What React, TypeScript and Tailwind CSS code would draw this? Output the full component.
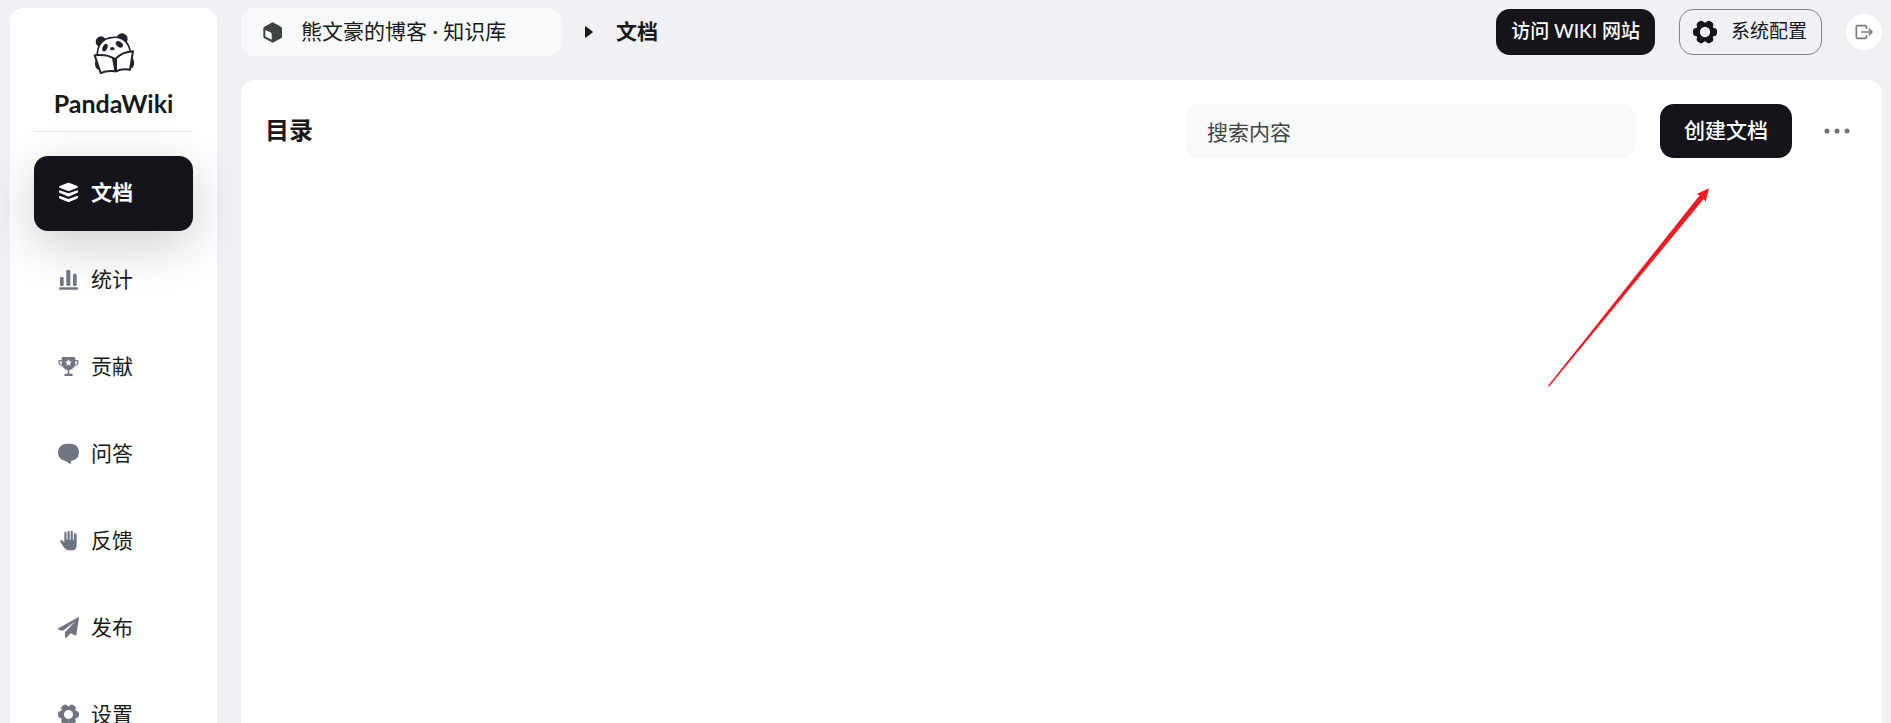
import type { ReactNode } from "react";

const gearLobes = [0, 60, 120, 180, 240, 300];

function GearIcon({ className }: { className?: string }) {
  return (
    <svg viewBox="-36 -36 72 72" className={className} fill="currentColor" aria-hidden="true">
      <circle r="22" fill="none" stroke="currentColor" strokeWidth="13" />
      {gearLobes.map((angle) => (
        <rect key={angle} x="16" y="-12" width="20" height="24" rx="10" transform={`rotate(${angle})`} />
      ))}
    </svg>
  );
}

function NavIcon({ children }: { children: ReactNode }) {
  return (
    <svg viewBox="0 0 63 63" className="size-[21px] shrink-0" fill="currentColor" aria-hidden="true">
      {children}
    </svg>
  );
}

const navItems = [
  {
    label: "文档",
    active: true,
    icon: (
      <NavIcon>
        <path d="M28 3Q31.500 1.500 35 3L58 12Q62 14.500 58 17L35 26Q31.500 27.500 28 26L5 17Q1 14.500 5 12Z" />
        <path d="M3 26Q5 24 9 26L31.500 34L54 26Q58 24 60 26Q62 31 57 33L35 42.500Q31.500 44 28 42.500L6 33Q1 31 3 26Z" />
        <path d="M3 43Q5 41 9 43L31.500 51L54 43Q58 41 60 43Q62 48 57 50L35 59.500Q31.500 61 28 59.500L6 50Q1 48 3 43Z" />
      </NavIcon>
    ),
  },
  {
    label: "统计",
    icon: (
      <NavIcon>
        <rect x="6" y="24" width="11" height="27" rx="4" />
        <rect x="25" y="2" width="12" height="49" rx="5" />
        <rect x="45" y="14" width="11" height="37" rx="4" />
        <rect x="3" y="55" width="57" height="7" rx="2" />
      </NavIcon>
    ),
  },
  {
    label: "贡献",
    icon: (
      <NavIcon>
        <path
          fillRule="evenodd"
          d="M14 3H49Q52 3 52 8V21Q50 39 34 42.500V53H42Q44 53 44 56.500Q44 60 42 60H21Q19 60 19 56.500Q19 53 21 53H29V42.500Q13 39 11 21V8Q11 3 14 3ZM31.500 9.500L28.500 16L21.500 17L26.500 22L25.300 29L31.500 25.500L37.700 29L36.500 22L41.500 17L34.500 16Z"
        />
        <path
          d="M12 14H6Q2.500 14 3 18Q4.500 28 15 29M51 14H57Q60.500 14 60 18Q58.500 28 48 29"
          fill="none"
          stroke="currentColor"
          strokeWidth="4"
        />
      </NavIcon>
    ),
  },
  {
    label: "问答",
    icon: (
      <NavIcon>
        <path d="M25 2H38Q63 4 63 28.500Q62 51 39 54V60Q39 63 36 62L24 54.500Q0 50 0 28.500Q1 4 25 2Z" />
      </NavIcon>
    ),
  },
  {
    label: "反馈",
    icon: (
      <NavIcon>
        <path d="M19 37V9Q19 5.500 22 5.500Q25.500 5.500 25.500 9V29H28.500V5Q28.500 2 31.500 2Q35 2 35 5V29H38V5Q38 2 41 2Q44.500 2 44.500 5V29H47.500V13Q47.500 9.500 50.500 9.500Q56 9 56 14V46Q56 61 43 61H32Q25 61 20 55L8 38Q6 34 8 31Q11 28 14 32Z" />
      </NavIcon>
    ),
  },
  {
    label: "发布",
    icon: (
      <NavIcon>
        <path d="M61 1Q63 0 63 3L55 53Q54 57 50 55L38 49L25 62Q21 64 21 60V46L53 12L15 41L2 38Q-1 36 2 33Z" />
      </NavIcon>
    ),
  },
  {
    label: "设置",
    icon: <GearIcon className="size-[21px] shrink-0" />,
  },
];

function PandaLogo() {
  return (
    <svg viewBox="275 97 132 132" className="size-11" fill="#22222d" aria-hidden="true">
      <circle cx="302" cy="126" r="16" />
      <circle cx="365" cy="118" r="17" />
      <path d="M287 180Q279 198 291 209L304 210V180ZM394 170Q408 190 396 205L380 205V175Z" />
      <path d="M291 170C289 134 310 114 339 113C370 111 388 132 390 160L344 182Z" fill="#fff" stroke="#22222d" strokeWidth="5" />
      <ellipse cx="314" cy="144" rx="7" ry="12" transform="rotate(25 314 144)" />
      <ellipse cx="357" cy="134" rx="8" ry="12" transform="rotate(-52 357 134)" />
      <ellipse cx="336" cy="147" rx="7" ry="5" />
      <path d="M283 167Q320 163 342 177L346 215Q322 211 301 220Z" fill="#fff" stroke="#22222d" strokeWidth="6" strokeLinejoin="round" />
      <path d="M346 177Q366 157 398 155L389 210Q365 206 347 215Z" fill="#fff" stroke="#22222d" strokeWidth="6" strokeLinejoin="round" />
      <path d="M335 176H350V216H343Z" />
    </svg>
  );
}

function Sidebar() {
  return (
    <aside className="w-[207px] shrink-0 rounded-t-[14px] bg-white px-6 pt-6">
      <div className="flex flex-col items-center border-b border-[#ececee] pb-3">
        <PandaLogo />
        <span className="mt-[11px] text-[25px] leading-8 font-bold">PandaWiki</span>
      </div>
      <nav className="mt-6 flex flex-col gap-3">
        {navItems.map((item) => (
          <a
            key={item.label}
            href="#"
            className={
              item.active
                ? "flex h-[75px] items-center gap-3 rounded-[14px] bg-[#14151a] px-6 pb-0.5 font-bold text-white shadow-[0_14px_52px_rgba(0,0,0,0.2)]"
                : "flex h-[75px] items-center gap-3 rounded-[14px] px-6 pb-0.5 text-[#6f7681]"
            }
          >
            {item.icon}
            <span className={item.active ? "pb-0.5 text-white" : "pb-0.5 text-[#171a17]"}>{item.label}</span>
          </a>
        ))}
      </nav>
    </aside>
  );
}

function Header() {
  return (
    <header className="flex h-12 items-center">
      <button type="button" className="flex h-12 w-[321px] items-center gap-[18px] rounded-[14px] bg-[#f8f9fb] px-[21px]">
        <svg viewBox="0 0 63 63" className="size-[21px]" aria-hidden="true">
          <path
            d="M29 2Q32 0 35 2L57 14Q60 16 60 19V44Q60 47 57 49L35 61Q32 63 29 61L7 49Q4 47 4 44V19Q4 16 7 14Z"
            fill="#40443f"
          />
          <path d="M10 24L25 31Q29 33 29 37V53L13 45Q10 43 10 40Z" fill="#f8f9fb" />
        </svg>
        <span className="pb-0.5">熊文豪的博客 · 知识库</span>
      </button>
      <svg viewBox="0 0 8 12" className="mx-[23px] h-3 w-2" fill="#171a17" aria-hidden="true">
        <path d="M0 1Q0 0 1 .5L7.500 5.500Q8 6 7.500 6.500L1 11.500Q0 12 0 11Z" />
      </svg>
      <span className="pb-0.5 font-bold">文档</span>

      <div className="ml-auto flex items-center gap-6">
        <button type="button" className="h-[46px] rounded-[14px] bg-[#14151a] px-[15px] pb-0.5 text-[19px] font-medium text-white">
          访问 WIKI 网站
        </button>
        <button
          type="button"
          className="flex h-[46px] items-center gap-3.5 rounded-[14px] border border-[#85868b] pr-3.5 pl-[13px] text-[19px] text-[#14151a]"
        >
          <GearIcon className="size-6" />
          <span className="pb-0.5">系统配置</span>
        </button>
        <button type="button" aria-label="退出" className="flex size-9 items-center justify-center rounded-full bg-white">
          <svg
            viewBox="0 0 54 54"
            className="size-[18px]"
            fill="none"
            stroke="#7b7b7b"
            strokeWidth="5"
            strokeLinecap="round"
            strokeLinejoin="round"
            aria-hidden="true"
          >
            <path d="M34 16V11Q34 8 31 8H7Q4 8 4 11V43Q4 46 7 46H31Q34 46 34 43V38M20 27H51M43 19L51 27L43 35" />
          </svg>
        </button>
      </div>
    </header>
  );
}

function Catalog() {
  return (
    <section className="relative mt-6 flex-1 rounded-t-[14px] bg-white p-6">
      <div className="flex items-center gap-6">
        <h1 className="mr-auto pb-0.5 text-[24px] leading-8 font-bold">目录</h1>
        <input
          type="text"
          aria-label="搜索内容"
          placeholder="搜索内容"
          className="h-[54px] w-[450px] rounded-[14px] bg-[#f8f9fb] px-[21px] outline-none placeholder:text-[#40443f]"
        />
        <button type="button" className="h-[54px] rounded-[14px] bg-[#14151a] px-6 pb-0.5 font-medium text-white">
          创建文档
        </button>
        <button type="button" aria-label="更多" className="flex size-[42px] items-center justify-center">
          <svg viewBox="0 0 26 6" className="h-1.5 w-[26px]" fill="#737373" aria-hidden="true">
            <circle cx="3" cy="3" r="2.500" />
            <circle cx="13" cy="3" r="2.500" />
            <circle cx="23" cy="3" r="2.500" />
          </svg>
        </button>
      </div>
      <svg
        viewBox="54 54 486 597"
        className="pointer-events-none absolute top-[108px] right-[172px] h-[199px] w-[162px]"
        fill="#ed1c24"
        aria-hidden="true"
      >
        <path d="M537 55L500 72L509 76L54 647L57 650L521 87L527 95Z" />
      </svg>
    </section>
  );
}

export default function App() {
  return (
    <div className="flex h-screen gap-6 overflow-hidden bg-[#f0f1f7] pt-2 pr-[9px] pl-2.5 font-['Lato','Noto_Sans_CJK_SC',sans-serif] text-[21px] leading-8 text-[#171a17]">
      <Sidebar />
      <main className="flex min-w-0 flex-1 flex-col">
        <Header />
        <Catalog />
      </main>
    </div>
  );
}
